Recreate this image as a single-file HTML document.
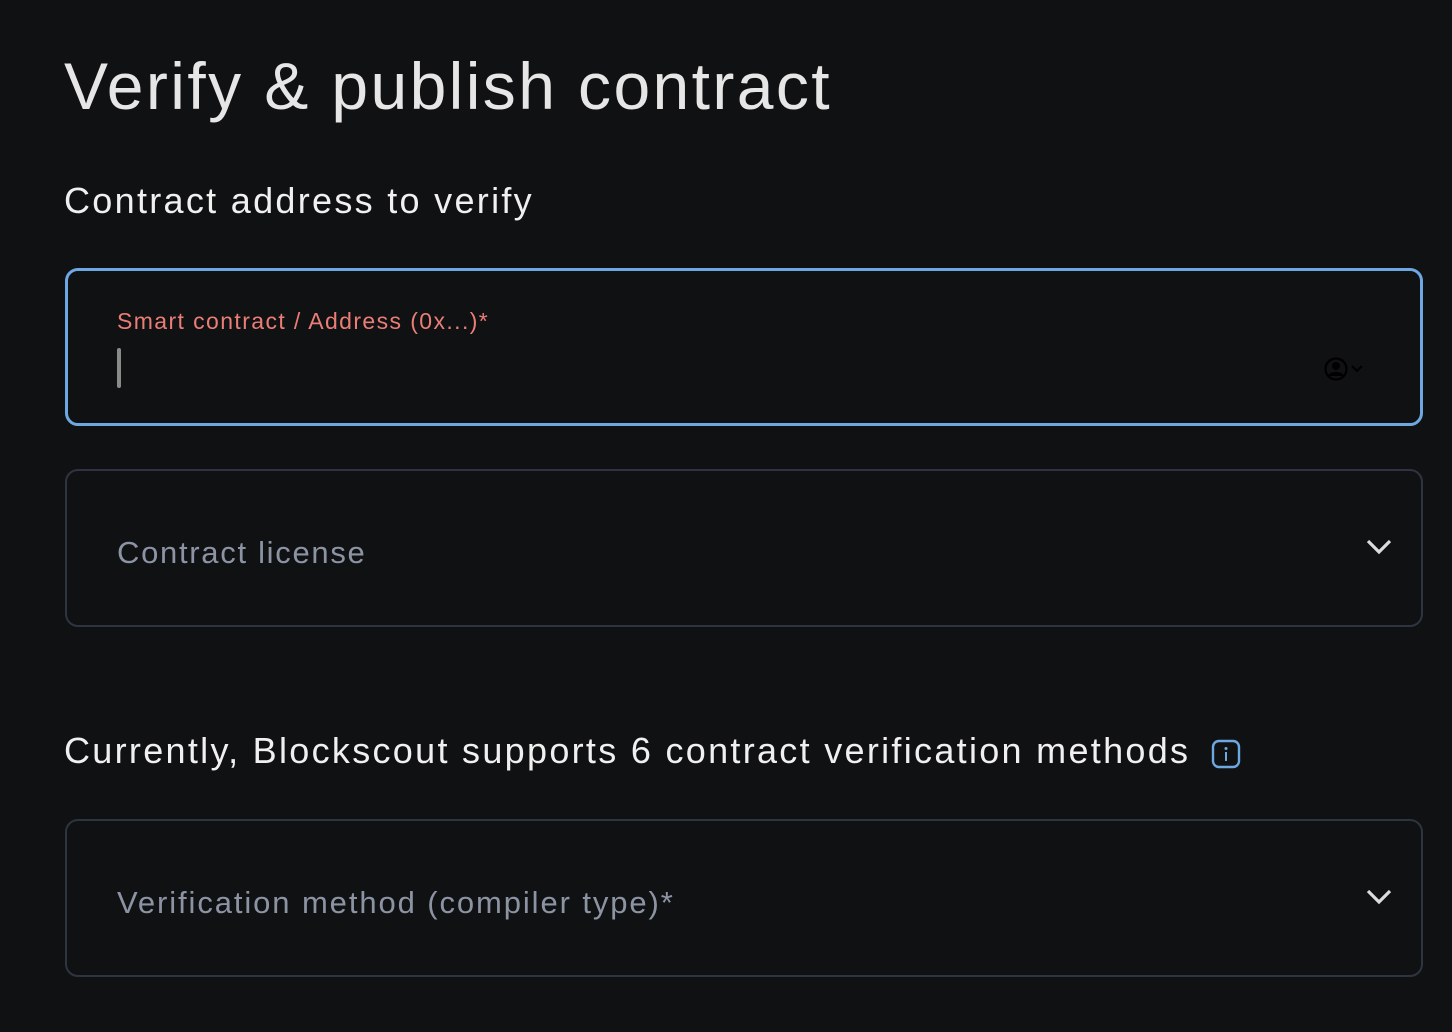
<!DOCTYPE html>
<html><head><meta charset="utf-8"><style>
html,body{margin:0;padding:0;background:#101113;width:1452px;height:1032px;overflow:hidden;font-family:"Liberation Sans",sans-serif;}
.h1{position:absolute;left:64px;top:48px;font-size:66px;color:#e6e6e6;letter-spacing:2.4px;white-space:nowrap;}
.h2{position:absolute;left:64px;font-size:36px;color:#f0f0f0;white-space:nowrap;letter-spacing:2.3px;}
.box{position:absolute;left:65px;width:1358px;height:158px;box-sizing:border-box;border:2px solid #2e3440;border-radius:13px;}
.box.focus{border:3px solid #6ea8e2;}
.lab{position:absolute;left:49px;top:37px;font-size:23px;color:#eb7d77;letter-spacing:1.4px;}
.cur{position:absolute;left:49px;top:77px;width:4px;height:40px;background:#8a8a8a;border-radius:2px;}
.ph{position:absolute;left:50px;top:64px;font-size:31px;color:#8c93a3;}
.chev{position:absolute;right:28px;top:66px;}
</style></head><body>
<div class="h1">Verify &amp; publish contract</div>
<div class="h2" style="top:180px">Contract address to verify</div>
<div class="box focus" style="top:268px">
  <div class="lab">Smart contract / Address (0x...)*</div>
  <div class="cur"></div>
  <svg style="position:absolute;left:1255px;top:85px" width="44" height="26" viewBox="0 0 44 26">
    <circle cx="13" cy="13" r="10.5" fill="none" stroke="#000" stroke-width="2.2"/>
    <circle cx="13" cy="10" r="4" fill="#000"/>
    <path d="M6 20c2-4 12-4 14 0" fill="#000" stroke="#000" stroke-width="2"/>
    <path d="M29 10l5 5 5-5" fill="none" stroke="#000" stroke-width="2"/>
  </svg>
</div>
<div class="box" style="top:469px">
  <div class="ph" style="letter-spacing:1.7px">Contract license</div>
  <svg class="chev" width="28" height="20" viewBox="0 0 28 20"><path d="M3 4l11 11 11-11" fill="none" stroke="#dcdcdc" stroke-width="3.2"/></svg>
</div>
<div class="h2" style="top:730px">Currently, Blockscout supports 6 contract verification methods</div>
<svg style="position:absolute;left:1211px;top:739px" width="30" height="30" viewBox="0 0 30 30">
  <rect x="2" y="2" width="26" height="26" rx="6" fill="none" stroke="#6ea8e2" stroke-width="2.4"/>
  <circle cx="15" cy="9.5" r="1.5" fill="#6ea8e2"/>
  <rect x="14" y="13" width="2" height="9" fill="#6ea8e2"/>
</svg>
<div class="box" style="top:819px">
  <div class="ph" style="letter-spacing:1.9px">Verification method (compiler type)*</div>
  <svg class="chev" width="28" height="20" viewBox="0 0 28 20"><path d="M3 4l11 11 11-11" fill="none" stroke="#dcdcdc" stroke-width="3.2"/></svg>
</div>
</body></html>
